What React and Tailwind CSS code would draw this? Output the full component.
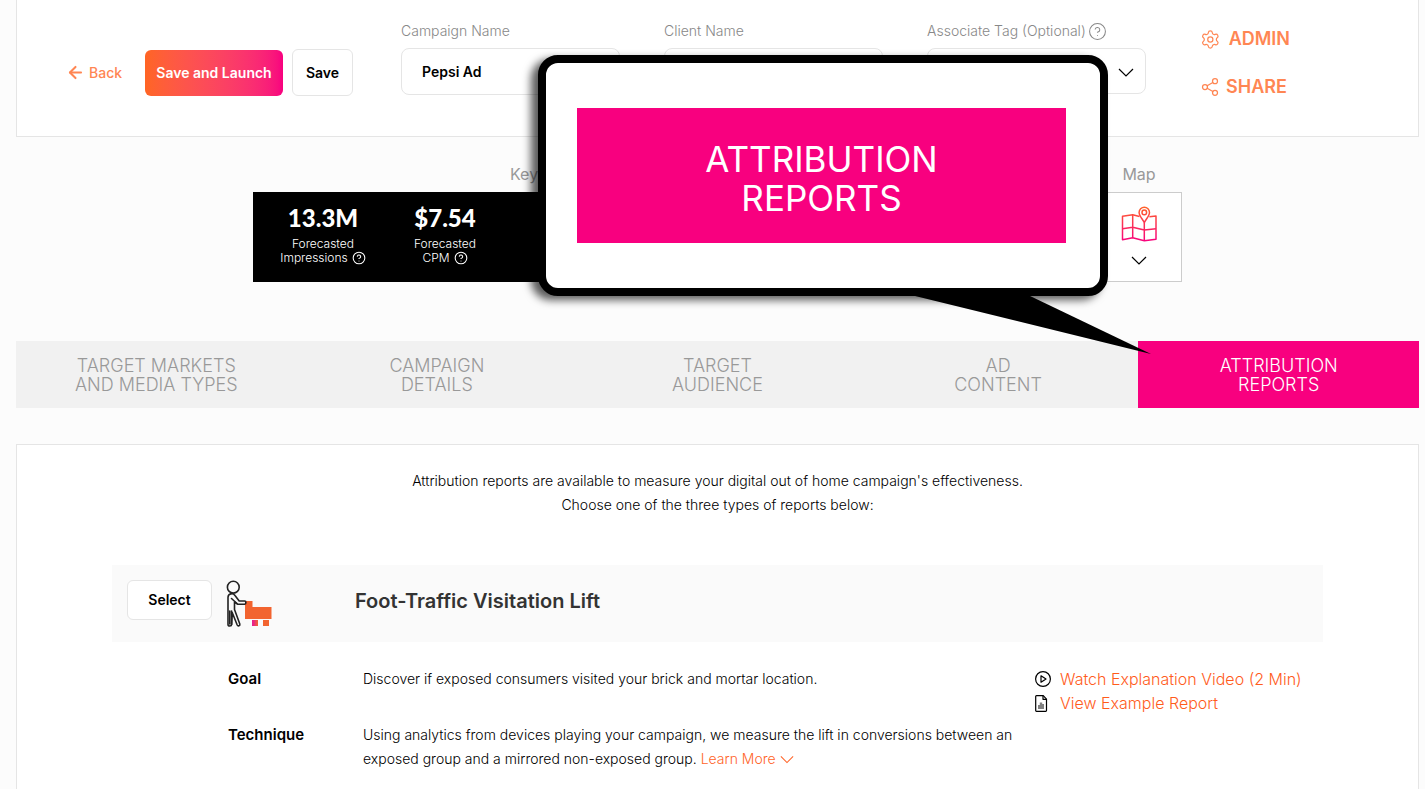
import React from 'react';
import { ArrowLeft, Settings, Share2, CircleHelp } from 'lucide-react';

const tabs = [
    { top: 'TARGET MARKETS', bottom: 'AND MEDIA TYPES' },
    { top: 'CAMPAIGN', bottom: 'DETAILS' },
    { top: 'TARGET', bottom: 'AUDIENCE' },
    { top: 'AD', bottom: 'CONTENT' },
    { top: 'ATTRIBUTION', bottom: 'REPORTS', active: true },
];

const metrics = [
    { value: '13.3M', label: 'Impressions' },
    { value: '$7.54', label: 'CPM' },
];

const Chevron = ({ className = '' }) => (
    <svg className={className} width="16" height="9" viewBox="0 0 16 9" fill="none" stroke="currentColor" strokeWidth="1.2">
        <path d="M1 1l7 7 7-7" />
    </svg>
);

const MapIcon = () => (
    <svg width="37" height="36" viewBox="0 0 37 36" fill="none" stroke="url(#mapGradient)" strokeWidth="1.5" strokeLinejoin="round">
        <defs>
            <linearGradient id="mapGradient" gradientUnits="userSpaceOnUse" x1="0" y1="0" x2="0" y2="36">
                <stop offset="0%" stopColor="#ff6428" />
                <stop offset="100%" stopColor="#f8007f" />
            </linearGradient>
        </defs>
        <path d="M18.5 10.5l-6.8-1.8-10.2 1.5v23.6l10.2-2 11.6 2.9 11.7-1.4V10l-6.6.8" />
        <path d="M11.7 8.7v23M23.3 17v17.7M1.5 22.8l10.2-1.5L23.3 24 35 22.7" />
        <path d="M23.3 16.8c-1-3-5.2-6.7-5.2-10.4a5.2 5.2 0 0 1 10.4 0c0 3.7-4.2 7.4-5.2 10.4z" />
        <circle cx="23.3" cy="6.4" r="2.3" />
    </svg>
);

const CartIcon = () => (
    <svg width="46" height="48" viewBox="0 0 46 48" fill="none" stroke="#222" strokeWidth="1.6" strokeLinecap="round" strokeLinejoin="round">
        <defs>
            <linearGradient id="wheelGradient" x1="0" y1="0" x2="1" y2="0">
                <stop offset="20%" stopColor="#e8208c" />
                <stop offset="100%" stopColor="#f26430" />
            </linearGradient>
        </defs>
        <path fill="#f26430" stroke="none" d="M19 21h7.5v6h19v12H19z" />
        <path fill="url(#wheelGradient)" stroke="none" d="M26 40h6v6h-6z" />
        <path fill="#f26430" stroke="none" d="M37 40h6v6h-6z" />
        <circle cx="7.3" cy="7.2" r="5.9" />
        <path d="M5 13.8c-2 .5-3 1.7-3 3.7v27c0 2 3.6 2 3.6 0V31" />
        <path d="M5.6 44.5l.6-12 5 12.5c.8 1.6 3.2.8 2.6-1L8.5 29.5V22l3 2.2h7.2c1.6 0 1.6-3.2 0-3.2h-5.5L9 15.500c-1-1.500-2.500-2-4-1.700" />
        <path d="M5.5 18.500l5.500 5M3.800 31v13" />
    </svg>
);

const PlayIcon = () => (
    <svg width="17" height="17" viewBox="0 0 17 17" fill="none" stroke="#000" strokeWidth="1.2" strokeLinejoin="round">
        <circle cx="8" cy="8" r="7.4" />
        <path d="M6 4.8v6.4L11 8z" />
    </svg>
);

const ReportIcon = () => (
    <svg width="13" height="17" viewBox="0 0 13 17" fill="none" stroke="#000" strokeWidth="1.2" strokeLinejoin="round">
        <path d="M.7 1.500q0-.8.8-.8h6.800l3.200 3.400v11.400q0 .8-.8.800H1.500q-.8 0-.8-.8z" />
        <path d="M8 .7v3.600h3.500" />
        <path fill="#808080" stroke="none" d="M3 10h1.800V7.500h2.400V9H9v5H3z" />
    </svg>
);

const Field = ({ id, label, help, children }) => (
    <div className="flex-1">
        <label htmlFor={id} className="flex h-6 items-center gap-0.5 text-sm font-light text-[#888]">
            {label}
            {help && <CircleHelp size={19} strokeWidth={1.3} />}
        </label>
        <div className="relative mt-[5px]">{children}</div>
    </div>
);

const Header = () => (
    <header className="flex h-[137px] shrink-0 items-start border border-t-0 border-[#e5e5e5] bg-white pl-[53px] pr-32">
        <div className="mt-[49px] flex w-[331px] items-center">
            <a href="#back" className="flex w-[75px] items-center gap-1 text-sm font-medium text-[#ff8653]">
                <ArrowLeft size={19} strokeWidth={2.6} className="-ml-1" />
                Back
            </a>
            <button className="h-[46px] w-[138px] rounded-md bg-linear-to-r from-[#ff6523] to-[#f8007f] text-sm font-semibold text-white">
                Save and Launch
            </button>
            <button className="ml-[9px] h-[47px] w-[61px] rounded-md border border-[#e5e5e5] bg-white text-sm font-semibold text-black">
                Save
            </button>
        </div>
        <div className="mt-[19px] flex flex-1 gap-11">
            <Field id="campaign" label="Campaign Name">
                <input id="campaign" defaultValue="Pepsi Ad" className="h-[47px] w-full rounded-lg border border-[#e5e5e5] bg-white px-5 text-sm font-semibold text-black" />
            </Field>
            <Field id="client" label="Client Name">
                <input id="client" className="h-[47px] w-full rounded-lg border border-[#e5e5e5] bg-white px-5 text-sm" />
            </Field>
            <Field id="tag" label="Associate Tag (Optional)" help>
                <select id="tag" className="h-[46px] w-full appearance-none rounded-lg border border-[#e5e5e5] bg-white px-5 text-sm" />
                <Chevron className="pointer-events-none absolute right-3 top-5" />
            </Field>
        </div>
        <nav className="ml-[54px] mt-[27px] flex w-[90px] flex-col gap-6 text-lg font-semibold text-[#ff8653]">
            <a href="#admin" className="flex h-6 items-center gap-2">
                <Settings size={21} strokeWidth={1.4} />
                ADMIN
            </a>
            <a href="#share" className="flex h-6 items-center gap-1.5">
                <Share2 size={20} strokeWidth={1.5} />
                SHARE
            </a>
        </nav>
    </header>
);

const Summary = () => (
    <section className="mx-auto mt-[25px] flex w-[929px] shrink-0 text-[#999]">
        <div className="flex-1">
            <h2 className="h-[30px] pl-[257px] leading-6">Key</h2>
            <div className="flex h-[90px] bg-black pl-[9px] pt-[11px] text-center text-white">
                {metrics.map((item) => (
                    <div key={item.label} className="w-[122px]">
                        <p className="font-[Lato] text-2xl font-black leading-[30px]">{item.value}</p>
                        <p className="mt-1 text-xs font-light leading-[14px]">Forecasted</p>
                        <p className="flex items-center justify-center gap-1 text-xs font-light leading-[14px]">
                            {item.label} <CircleHelp size={14} strokeWidth={1.8} />
                        </p>
                    </div>
                ))}
            </div>
        </div>
        <div className="w-[86px] text-center">
            <h2 className="h-[30px] leading-6">Map</h2>
            <button aria-label="Map" className="flex h-[90px] w-full flex-col items-center border border-[#ccc] bg-white pt-[13px] text-black">
                <MapIcon />
                <Chevron className="mt-[14px]" />
            </button>
        </div>
    </section>
);

const Tabs = () => (
    <nav className="mt-[59px] grid shrink-0 grid-cols-5 bg-[#f1f1f1]">
        {tabs.map((tab) => (
            <a
                key={tab.top}
                href="#tab"
                className={
                    tab.active
                        ? 'h-[67px] bg-[#f8007f] pt-[15px] text-center text-lg font-light leading-[19px] text-white'
                        : 'h-[67px] pt-[15px] text-center text-lg font-light leading-[19px] text-[#999]'
                }
            >
                {tab.top}
                <br />
                {tab.bottom}
            </a>
        ))}
    </nav>
);

const Reports = () => (
    <section className="mt-9 flex-1 border border-b-0 border-[#e5e5e5] bg-white px-[95px] pt-6 text-sm font-light leading-6 text-black">
        <p className="text-center">
            Attribution reports are available to measure your digital out of home campaign's effectiveness.
            <br />
            Choose one of the three types of reports below:
        </p>
        <div className="mt-12 flex h-[77px] items-start bg-[#fafafa] px-[15px] pt-[15px]">
            <button className="h-10 w-[85px] rounded-md border border-[#e5e5e5] bg-white text-sm font-semibold">Select</button>
            <div className="ml-[14px] w-[129px]">
                <CartIcon />
            </div>
            <h1 className="mt-[7px] text-xl font-semibold leading-7 text-[#333]">Foot-Traffic Visitation Lift</h1>
        </div>
        <div className="mt-[25px] flex pl-[116px]">
            <dl className="grid w-[807px] grid-cols-[135px_1fr] gap-y-8">
                <dt className="text-[15px] font-semibold leading-6">Goal</dt>
                <dd>Discover if exposed consumers visited your brick and mortar location.</dd>
                <dt className="text-[15px] font-semibold leading-6">Technique</dt>
                <dd>
                    Using analytics from devices playing your campaign, we measure the lift in conversions between an
                    <br />
                    exposed group and a mirrored non-exposed group.{' '}
                    <a href="#more" className="inline-flex items-center gap-1 text-[#ff6428]">
                        Learn More <Chevron className="w-3.5" />
                    </a>
                </dd>
            </dl>
            <div className="text-base font-light leading-6 text-[#ff5c1c]">
                <a href="#video" className="flex items-center">
                    <span className="w-[25px]"><PlayIcon /></span>
                    Watch Explanation Video (2 Min)
                </a>
                <a href="#example" className="flex items-center">
                    <span className="w-[25px]"><ReportIcon /></span>
                    View Example Report
                </a>
            </div>
        </div>
    </section>
);

// speech bubble that points at the active tab
const Callout = () => (
    <div className="absolute left-[538px] top-[55px] w-[570px]">
        <div className="rounded-[20px] border-8 border-black bg-white pb-[45px] pl-[31px] pr-[34px] pt-[45px] shadow-[-7px_4px_9px_rgba(0,0,0,0.65)]">
            <p className="h-[135px] bg-[#f8007f] pt-8 text-center text-[35px] leading-[39px] text-white">
                ATTRIBUTION
                <br />
                REPORTS
            </p>
        </div>
        <svg className="absolute left-[373px] top-[240px]" width="240" height="60" viewBox="0 0 240 60">
            <path d="M0 0h117L240 59z" fill="#000" />
        </svg>
    </div>
);

const App = () => (
    <main className="relative flex h-screen flex-col overflow-hidden bg-[#fcfcfc] pl-4 pr-1.5 font-[Inter,sans-serif]">
        <Header />
        <Summary />
        <Tabs />
        <Reports />
        <Callout />
    </main>
);

export default App;
